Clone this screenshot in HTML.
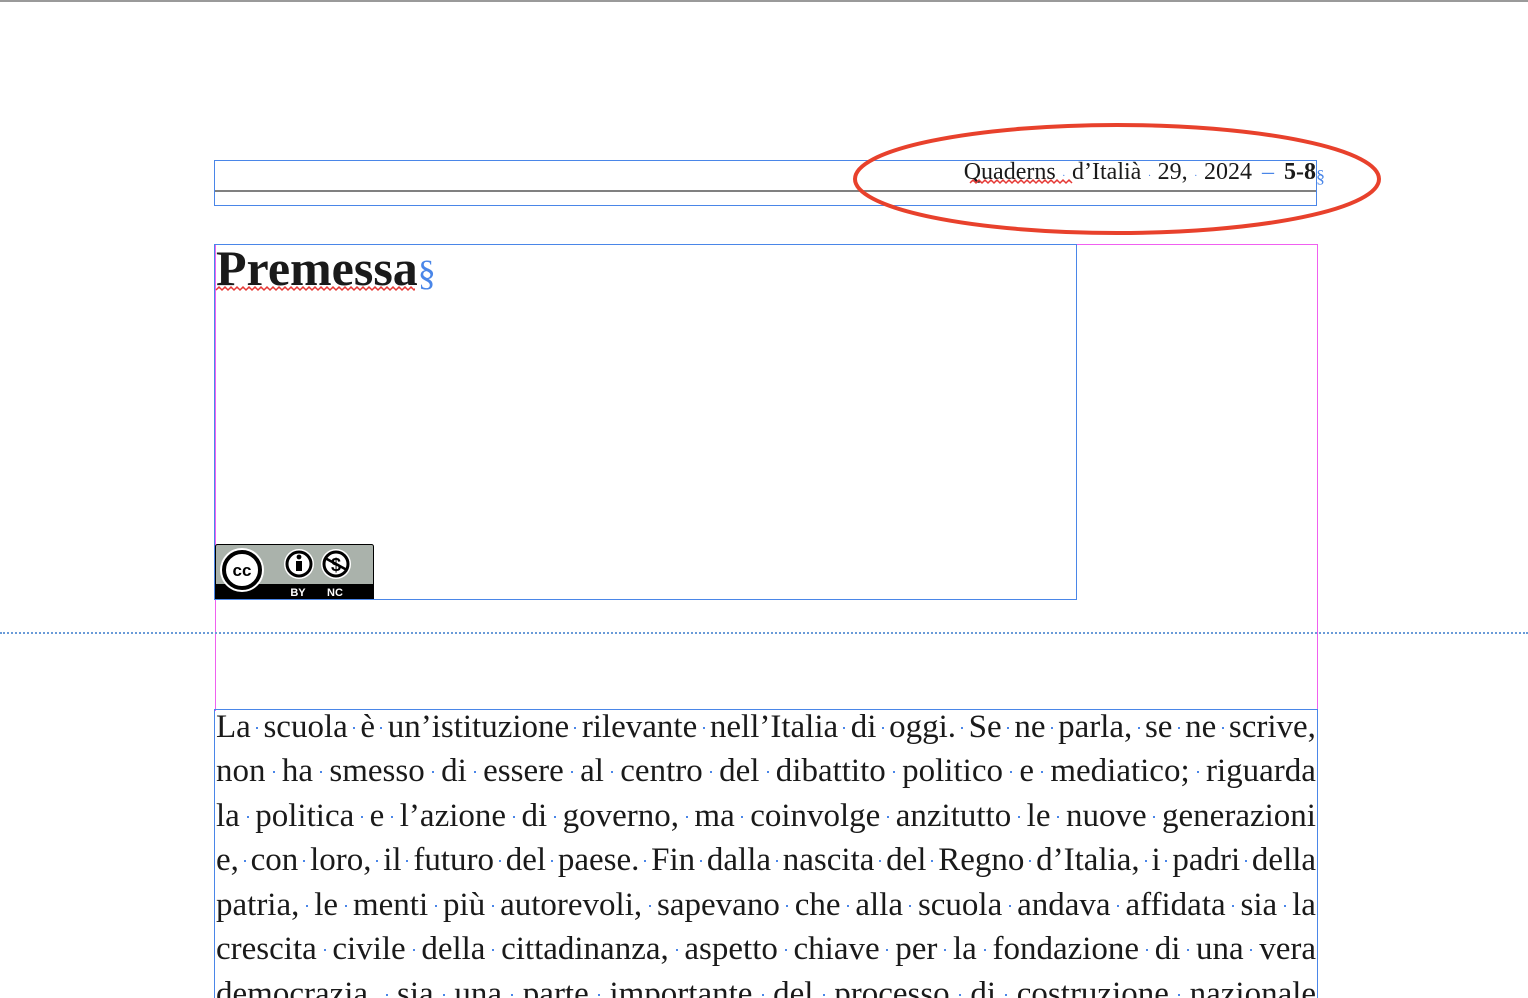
<!DOCTYPE html>
<html><head><meta charset="utf-8"><style>
html,body{margin:0;padding:0;background:#fff;width:1528px;height:998px;overflow:hidden;position:relative;font-family:"Liberation Serif",serif;color:#1a1a1a}
.abs{position:absolute}
.l{position:absolute;left:216px;width:1100px;display:flex;align-items:baseline;font-size:33px;white-space:nowrap;height:44px;line-height:44px}
.l i{flex:1;display:flex;justify-content:center;align-self:center}
.l i::after{content:"";width:2px;height:2px;background:#4a86e8;margin-top:2px}
.d{color:#4a86e8;font-size:10px}
</style></head><body>
<div class="abs" style="left:0;top:0;width:1528px;height:2px;background:#9a9a9a"></div>
<div class="abs" style="left:214px;top:160px;width:1101px;height:44px;border:1.5px solid #4a86e8"></div>
<div class="abs" style="left:215px;top:190px;width:1101px;height:2px;background:#808080"></div>
<div class="abs" style="right:212px;top:156px;font-size:24px;white-space:nowrap;line-height:32px;word-spacing:4px">Quaderns<span class="d"> · </span>d’Italià<span class="d"> · </span>29,<span class="d"> · </span>2024 <span style="color:#4a86e8">–</span> <b>5-8</b></div>
<div class="abs" style="left:1316px;top:162px;color:#4a86e8;font-size:18px;line-height:28px">§</div>
<svg class="abs" style="left:968px;top:176px" width="108" height="12"><path d="M2 7 l3 -3 l3 3 l3 -3 l3 3 l3 -3 l3 3 l3 -3 l3 3 l3 -3 l3 3 l3 -3 l3 3 l3 -3 l3 3 l3 -3 l3 3 l3 -3 l3 3 l3 -3 l3 3 l3 -3 l3 3 l3 -3 l3 3 l3 -3 l3 3 l3 -3 l3 3 l3 -3 l3 3 l3 -3 l3 3 l3 -3 l3 3" fill="none" stroke="#e53935" stroke-width="1.5"/></svg>
<svg class="abs" style="left:0;top:0" width="1528" height="998"><ellipse cx="1117" cy="179" rx="262" ry="54" fill="none" stroke="#e8412c" stroke-width="4"/></svg>
<div class="abs" style="left:215px;top:244px;width:1101px;height:466px;border:1px solid #f060f0;border-bottom:none"></div>
<div class="abs" style="left:214px;top:244px;width:861px;height:354px;border:1.5px solid #4a86e8"></div>
<div class="abs" style="left:216px;top:236px;font-size:50px;font-weight:bold;line-height:64px">Premessa<span style="color:#4a86e8;font-weight:normal;font-size:36px">§</span></div>
<svg class="abs" style="left:215px;top:284px" width="200" height="10"><path d="M1 6 l3 -3 l3 3 l3 -3 l3 3 l3 -3 l3 3 l3 -3 l3 3 l3 -3 l3 3 l3 -3 l3 3 l3 -3 l3 3 l3 -3 l3 3 l3 -3 l3 3 l3 -3 l3 3 l3 -3 l3 3 l3 -3 l3 3 l3 -3 l3 3 l3 -3 l3 3 l3 -3 l3 3 l3 -3 l3 3 l3 -3 l3 3 l3 -3 l3 3 l3 -3 l3 3 l3 -3 l3 3 l3 -3 l3 3 l3 -3 l3 3 l3 -3 l3 3 l3 -3 l3 3 l3 -3 l3 3 l3 -3 l3 3 l3 -3 l3 3 l3 -3 l3 3 l3 -3 l3 3 l3 -3 l3 3 l3 -3 l3 3 l3 -3 l3 3 l3 -3 l3 3 l3 -3 l3 3 l3 -3 l3 3 l3 -3 l3 3 l3 -3 l3 3 l3 -3 l3 3 l3 -3 l3 3" fill="none" stroke="#e53935" stroke-width="1.5"/></svg>
<svg class="abs" style="left:215px;top:544px" width="159" height="55" viewBox="0 0 159 55">
<rect x="0.5" y="0.5" width="158" height="54" rx="2" fill="#aab2ab" stroke="#000"/>
<rect x="0" y="40" width="159" height="15" fill="#000"/>
<circle cx="27" cy="26" r="22" fill="#fff"/>
<circle cx="27" cy="26" r="18" fill="#fff" stroke="#000" stroke-width="4"/>
<text x="27" y="32" font-family="Liberation Sans" font-weight="bold" font-size="17" text-anchor="middle">cc</text>
<circle cx="84" cy="20" r="15" fill="#fff"/><circle cx="84" cy="20" r="12" fill="#fff" stroke="#000" stroke-width="3"/>
<circle cx="84" cy="13" r="2.4"/><rect x="81" y="17" width="6" height="10"/>
<circle cx="121" cy="20" r="15" fill="#fff"/><circle cx="121" cy="20" r="12" fill="#fff" stroke="#000" stroke-width="3"/>
<text x="121" y="27" font-family="Liberation Sans" font-weight="bold" font-size="18" text-anchor="middle">$</text>
<line x1="110" y1="14" x2="132" y2="26" stroke="#000" stroke-width="2.5"/>
<text x="83" y="52" fill="#fff" font-family="Liberation Sans" font-weight="bold" font-size="11" text-anchor="middle">BY</text>
<text x="120" y="52" fill="#fff" font-family="Liberation Sans" font-weight="bold" font-size="11" text-anchor="middle">NC</text>
</svg>
<div class="abs" style="left:0;top:632px;width:1528px;border-top:2px dotted #6a9bd8"></div>
<div class="abs" style="left:214px;top:709px;width:1102px;height:300px;border:1.5px solid #4a86e8"></div>
<div id="t">
<div class="l" style="top:705px">La scuola è un’istituzione rilevante nell’Italia di oggi. Se ne parla, se ne scrive,</div>
<div class="l" style="top:749px">non ha smesso di essere al centro del dibattito politico e mediatico; riguarda</div>
<div class="l" style="top:794px">la politica e l’azione di governo, ma coinvolge anzitutto le nuove generazioni</div>
<div class="l" style="top:838px">e, con loro, il futuro del paese. Fin dalla nascita del Regno d’Italia, i padri della</div>
<div class="l" style="top:883px">patria, le menti più autorevoli, sapevano che alla scuola andava affidata sia la</div>
<div class="l" style="top:927px">crescita civile della cittadinanza, aspetto chiave per la fondazione di una vera</div>
<div class="l" style="top:972px">democrazia, sia una parte importante del processo di costruzione nazionale</div>
</div>
<script>
document.querySelectorAll('.l').forEach(function(d){
 var w=d.textContent.trim().split(/\s+/);d.innerHTML='';
 w.forEach(function(x,k){var s=document.createElement('span');s.textContent=x;d.appendChild(s);
  if(k<w.length-1)d.appendChild(document.createElement('i'));});
 var sw=0;d.querySelectorAll('span').forEach(function(s){sw+=s.offsetWidth});
 var avail=1100-8*(w.length-1);
 if(sw>avail){d.style.fontSize=(33*avail/sw)+'px';}
});
</script>
</body></html>
